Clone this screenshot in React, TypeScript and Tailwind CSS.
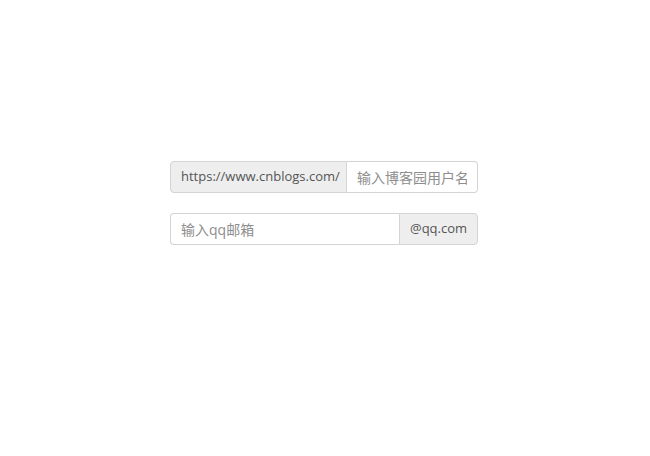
export default function App() {
  return (
    <div
      className="min-h-[456px] w-full bg-white pt-[161px] pl-[170px]"
      style={{ fontFamily: '"Open Sans", "Noto Sans CJK SC", sans-serif' }}
    >
      <div className="flex w-[308px] flex-col gap-[20px] text-[#555]">
        <div className="flex h-[32px]">
          <span className="flex w-[177px] shrink-0 items-center rounded-l-[4px] border border-[#d4d4d4] bg-[#eee] px-[10px] text-[13px]">
            https://www.cnblogs.com/
          </span>
          <input
            className="h-full min-w-0 flex-1 rounded-r-[4px] border border-l-0 border-[#d4d4d4] bg-white px-[10px] text-[14px] text-[#555] outline-none placeholder:text-[#8e8e8e]"
            placeholder="输入博客园用户名"
          />
        </div>
        <div className="flex h-[32px]">
          <input
            className="h-full min-w-0 flex-1 rounded-l-[4px] border border-r-0 border-[#d4d4d4] bg-white px-[10px] text-[14px] text-[#555] outline-none placeholder:text-[#8e8e8e]"
            placeholder="输入qq邮箱"
          />
          <span className="flex w-[79px] shrink-0 items-center rounded-r-[4px] border border-[#d4d4d4] bg-[#eee] px-[10px] text-[13px]">
            @qq.com
          </span>
        </div>
      </div>
    </div>
  )
}
